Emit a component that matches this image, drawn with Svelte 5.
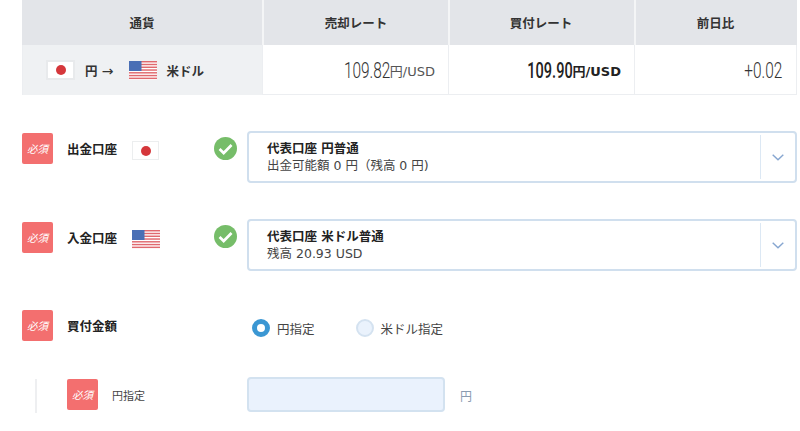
<script>
  const rows = [
    { label: "出金口座", flag: "jp", name: "代表口座 円普通", sub: "出金可能額 0 円（残高 0 円)" },
    { label: "入金口座", flag: "us", name: "代表口座 米ドル普通", sub: "残高 20.93 USD" }
  ];
  const stripes = [0, 1, 2, 3, 4, 5, 6];
</script>

{#snippet flagJp(cls)}
  <span class="flag-jp {cls}"><span class="sun"></span></span>
{/snippet}

{#snippet flagUs()}
  <svg class="flag-us" viewBox="0 0 28 19" width="28" height="19">
    <rect width="28" height="19" fill="#fff" />
    {#each stripes as s}
      <rect y={s * 2.77} width="28" height="1.45" fill="#e0696f" />
    {/each}
    <rect width="12.5" height="10" fill="#4a6fb5" />
  </svg>
{/snippet}

{#snippet badge()}
  <span class="badge">必須</span>
{/snippet}

<div class="page">
  <div class="rates">
    <div class="th">通貨</div>
    <div class="th">売却レート</div>
    <div class="th">買付レート</div>
    <div class="th">前日比</div>
    <div class="td pair">
      {@render flagJp("wide")}
      <span class="cur first">円 <span class="to">→</span></span>
      {@render flagUs()}
      <span class="cur">米ドル</span>
    </div>
    <div class="td num"><span class="big">109.82</span><span class="unit">円/USD</span></div>
    <div class="td num buy"><span class="big">109.90</span><span class="unit">円/USD</span></div>
    <div class="td num last"><span class="big">+0.02</span></div>
  </div>

  {#each rows as row}
    <div class="form-row account">
      <div class="head">
        {@render badge()}
        <span class="label">{row.label}</span>
        <span class="head-flag">
          {#if row.flag == "jp"}
            {@render flagJp("")}
          {:else}
            {@render flagUs()}
          {/if}
        </span>
      </div>
      <svg class="check" viewBox="0 0 24 24" width="23" height="23">
        <circle cx="12" cy="12" r="12" fill="#76bd69" />
        <path d="M5.8 12.5l4.3 4.2 8.2-8.4" fill="none" stroke="#fff" stroke-width="2.8" />
      </svg>
      <div class="select">
        <div class="select-text">
          <div class="name">{row.name}</div>
          <div class="sub">{row.sub}</div>
        </div>
        <div class="arrow">
          <svg viewBox="0 0 12 7" width="12" height="7">
            <path d="M.7.7L6 5.8 11.3.7" fill="none" stroke="#86a6d0" stroke-width="1.4" />
          </svg>
        </div>
      </div>
    </div>
  {/each}

  <div class="form-row amount">
    <div class="head">
      {@render badge()}
      <span class="label">買付金額</span>
    </div>
    <div class="radios">
      <span class="radio on"></span>
      <span class="radio-text">円指定</span>
      <span class="radio"></span>
      <span class="radio-text">米ドル指定</span>
    </div>
  </div>

  <div class="sub-row">
    <div class="sub-head">
      {@render badge()}
      <span class="sub-label">円指定</span>
    </div>
    <div class="input"></div>
    <span class="suffix">円</span>
  </div>
</div>

<style>
  :global(body) {
    margin: 0;
    background: #fff;
  }
  .page {
    width: 800px;
    height: 431px;
    overflow: hidden;
    box-sizing: border-box;
    padding: 0 3px 0 22px;
    font-family: "DejaVu Sans", "Noto Sans CJK JP", sans-serif;
    color: #333;
  }
  .rates {
    display: grid;
    grid-template-columns: 240px 186px 186px 163px;
    grid-template-rows: 45px 50px;
    border-bottom: 1px solid #eceef1;
    box-sizing: border-box;
    height: 95px;
  }
  .th {
    background: #e3e5e9;
    border-left: 2px solid #f4f5f6;
    display: flex;
    align-items: center;
    justify-content: center;
    font-size: 12.5px;
    font-weight: 700;
    color: #333;
    padding-bottom: 1px;
  }
  .th:first-child {
    border-left: none;
  }
  .th:nth-child(n + 3) {
    padding-right: 2px;
  }
  .td {
    display: flex;
    align-items: center;
    border-left: 1px solid #eceef1;
  }
  .pair {
    background: #eff1f3;
    padding-left: 23px;
    font-size: 12.5px;
    font-weight: 700;
  }
  .cur.first {
    margin: 0 15px 0 10px;
  }
  .to {
    font-weight: 400;
    font-size: 14px;
  }
  .cur {
    margin-left: 10px;
  }
  .num {
    justify-content: flex-end;
    padding-right: 13px;
  }
  .num.last {
    border-right: 1px solid #eceef1;
    padding-right: 14px;
  }
  .big {
    font-family: Roboto, sans-serif;
    font-size: 22px;
    font-weight: 300;
    display: inline-block;
    transform: scaleX(0.7);
    transform-origin: right center;
    color: #333;
  }
  .unit {
    font-size: 13px;
    color: #555;
  }
  .buy .big {
    font-weight: 500;
    color: #222;
    transform: scaleX(0.66);
  }
  .buy .unit {
    font-weight: 700;
    color: #222;
  }
  .flag-jp {
    width: 27px;
    height: 19px;
    box-sizing: border-box;
    border: 1px solid #eceeef;
    background: #fff;
    display: inline-flex;
    align-items: center;
    justify-content: center;
    flex: none;
  }
  .flag-jp.wide {
    width: 29px;
    height: 20px;
    border: 2px solid #e8eaec;
  }
  .sun {
    width: 10px;
    height: 10px;
    border-radius: 50%;
    background: #d5373b;
  }
  .flag-us {
    display: block;
    flex: none;
  }
  .badge {
    width: 31px;
    height: 31px;
    flex: none;
    border-radius: 2px;
    background: #f36f6f;
    color: #fff;
    font-size: 10.5px;
    font-style: italic;
    display: flex;
    align-items: center;
    justify-content: center;
  }
  .form-row {
    display: flex;
    align-items: flex-start;
  }
  .account {
    height: 52px;
    margin-top: 36px;
  }
  .head {
    width: 192px;
    display: flex;
    align-items: center;
    flex: none;
    height: 31px;
    margin-top: 2px;
  }
  .account + .account .head {
    margin-top: 3px;
  }
  .head-flag {
    display: flex;
    margin-top: 4px;
  }
  .label {
    margin-left: 14px;
    margin-right: 15px;
    font-size: 12.5px;
    font-weight: 700;
    color: #222;
  }
  .check {
    margin-top: 6px;
    flex: none;
  }
  .select {
    width: 550px;
    height: 52px;
    margin-left: 10px;
    box-sizing: border-box;
    border: 2px solid #d0dfee;
    border-radius: 4px;
    display: flex;
    align-items: stretch;
  }
  .select-text {
    flex: 1;
    padding: 7px 0 0 18px;
    font-size: 12.5px;
    line-height: 17px;
  }
  .name {
    font-weight: 700;
    color: #222;
  }
  .sub {
    color: #444;
  }
  .arrow {
    width: 34px;
    margin: 2px 0;
    border-left: 1px solid #dce8f4;
    display: flex;
    align-items: center;
    justify-content: center;
  }
  .amount {
    margin-top: 39px;
    height: 39px;
  }
  .amount .head {
    margin-top: 0;
    width: 230px;
  }
  .radios {
    display: flex;
    align-items: center;
    height: 18px;
    margin-top: 9px;
    font-size: 12.5px;
    color: #444;
  }
  .radio {
    width: 18px;
    height: 18px;
    box-sizing: border-box;
    border-radius: 50%;
    border: 2px solid #d4e2f0;
    background: #eaf2fc;
  }
  .radio.on {
    border: 5px solid #3b97d3;
    background: #fff;
  }
  .radio-text {
    margin-left: 7px;
    margin-right: 41px;
  }
  .sub-row {
    display: flex;
    align-items: flex-start;
    margin: 30px 0 0 13px;
    border-left: 2px solid #eeeff1;
    height: 34px;
  }
  .sub-head {
    width: 210px;
    height: 31px;
    flex: none;
    padding-left: 30px;
    box-sizing: border-box;
    display: flex;
    align-items: center;
  }
  .sub-label {
    margin-left: 14px;
    font-size: 11px;
    color: #444;
  }
  .input {
    width: 198px;
    height: 35px;
    margin-top: -2px;
    box-sizing: border-box;
    border: 2px solid #d3e2f0;
    border-radius: 4px;
    background: #eaf2fd;
  }
  .suffix {
    margin-left: 15px;
    margin-top: 8px;
    font-size: 12px;
    color: #8a9bb0;
  }
</style>
